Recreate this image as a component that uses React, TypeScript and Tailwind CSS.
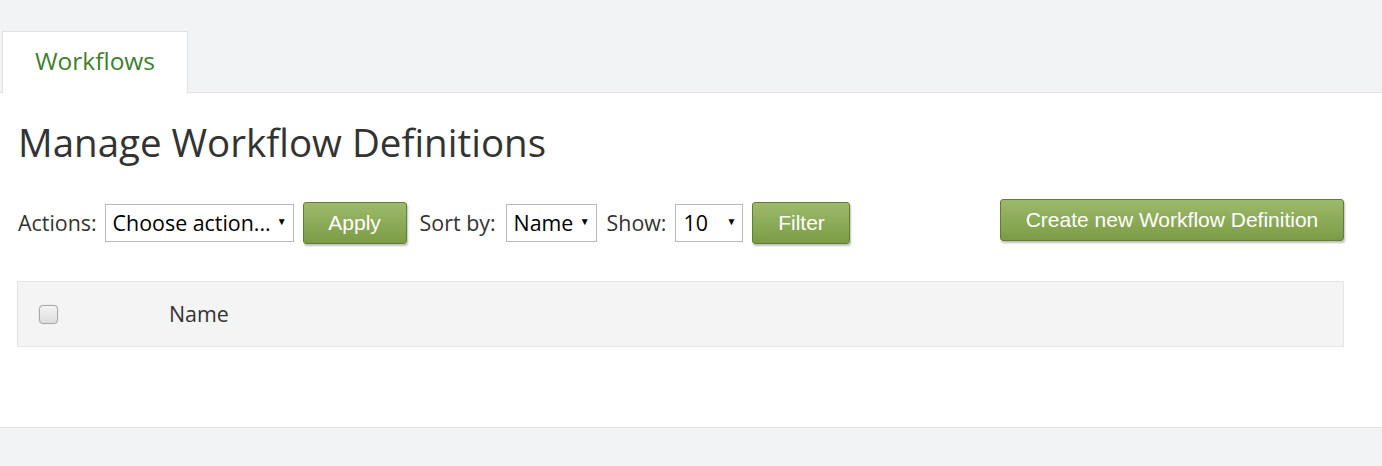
import React from 'react';

const ui = { fontFamily: '"Open Sans", "Noto Sans", sans-serif' };
const arial = { fontFamily: '"Liberation Sans", Arial, sans-serif' };

function Caret() {
  return <span className="-mt-[4px] text-[10px] leading-none text-black">▼</span>;
}

function FakeSelect({ label, width }: { label: string; width: string }) {
  return (
    <div
      className={`flex h-[38px] items-center justify-between border border-[#b9b9b9] bg-white pl-[7px] pr-[6px] text-[21.4px] text-black ${width}`}
    >
      <span className="truncate">{label}</span>
      <Caret />
    </div>
  );
}

function GreenButton({ children, className = '' }: { children: React.ReactNode; className?: string }) {
  return (
    <button
      style={arial}
      className={`flex items-center justify-center rounded-[3px] border border-[#5f7f34] bg-gradient-to-b from-[#9dba6b] to-[#7b9c45] text-[21px] text-white shadow-[1px_2px_2px_rgba(0,0,0,0.25)] ${className}`}
    >
      {children}
    </button>
  );
}

export default function App() {
  return (
    <div style={ui} className="flex h-[466px] w-full flex-col bg-[#f2f3f5] text-[#333]">
      {/* tab strip */}
      <div className="flex h-[93px] items-end border-b border-[#dfe1e4] pl-[2px]">
        <div className="-mb-px flex h-[62px] w-[186px] items-center justify-center border border-b-0 border-[#dfe1e4] bg-white pb-[2px] text-[24.5px] text-[#3e7f2c]">
          Workflows
        </div>
      </div>

      {/* content */}
      <div className="h-[335px] border-b border-[#dfe1e4] bg-white px-[17px]">
        <h1 className="mt-[22px] ml-[1px] text-[38.5px] leading-[54px] text-[#333]">Manage Workflow Definitions</h1>

        <div className="mt-[33px] flex items-start">
          <div className="flex items-center">
            <span className="ml-[1px] mr-[8px] text-[21.4px]">Actions:</span>
            <FakeSelect label="Choose action..." width="w-[189px]" />
            <GreenButton className="ml-[9px] h-[42px] w-[104px]">Apply</GreenButton>
            <span className="ml-[13px] mr-[10px] text-[21.4px]">Sort by:</span>
            <FakeSelect label="Name" width="w-[91px]" />
            <span className="ml-[10px] mr-[9px] text-[21.4px]">Show:</span>
            <FakeSelect label="10" width="w-[68px]" />
            <GreenButton className="ml-[9px] h-[42px] w-[98px]">Filter</GreenButton>
          </div>
          <GreenButton className="ml-auto mr-[21px] -mt-[3px] h-[42px] w-[344px]">
            Create new Workflow Definition
          </GreenButton>
        </div>

        <div className="mt-[37px] mr-[21px] flex h-[66px] items-center border border-[#e6e6e6] bg-[#f4f4f4]">
          <span className="ml-[21px] h-[19px] w-[19px] rounded-[4px] border border-[#a9a9a9] bg-gradient-to-b from-[#f4f4f4] to-[#dcdcdc] shadow-[0_0_1px_rgba(0,0,0,0.3)]" />
          <span className="ml-[111px] text-[21.4px]">Name</span>
        </div>
      </div>
    </div>
  );
}
